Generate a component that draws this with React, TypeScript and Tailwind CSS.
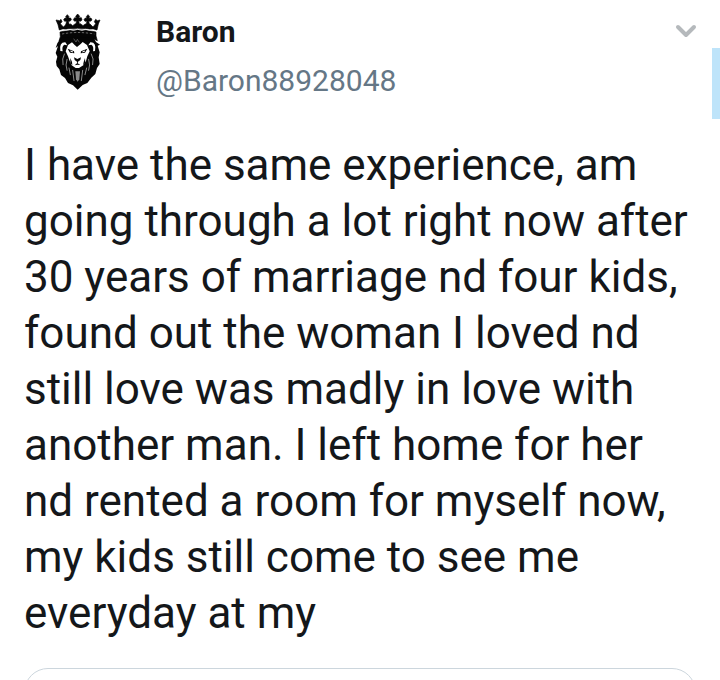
import { ChevronDown } from "lucide-react";

const tweet = {
  name: "Baron",
  handle: "@Baron88928048",
  text: "I have the same experience, am going through a lot right now after 30 years of marriage nd four kids, found out the woman I loved nd still love was madly in love with another man. I left home for her nd rented a room for myself now, my kids still come to see me everyday at my",
};

const LionAvatar = () => (
  <svg viewBox="28 22 144 240" className="h-20 w-12" role="img" aria-label="Lion wearing a crown">
    {/* Crown */}
    <g fill="#050505" stroke="#050505" strokeWidth="2" strokeLinejoin="round">
      <path d="M34 46 L45 48 L49 44 L52 51 L47 57 L56 67 L66 58 L69 61 L78 58 L84 63 L92 57 L99 62 L107 57 L115 63 L122 58 L131 61 L136 58 L145 67 L153 57 L149 51 L153 44 L158 48 L166 46 L161 58 L157 76 Q98 66 44 76 L40 60 Z" />
      <path d="M68 30 L73 36 L71 40 L78 40 L80 46 L75 50 L71 49 L74 62 L63 62 L66 49 L60 50 L57 45 L61 40 L66 41 L63 36 Z" />
      <path d="M99 28 L105 35 L102 40 L110 39 L112 46 L107 50 L102 48 L105 62 L93 62 L96 48 L90 50 L86 45 L90 39 L96 40 L93 35 Z" />
      <path d="M130 30 L135 36 L132 41 L139 40 L142 46 L137 50 L132 49 L135 62 L124 62 L127 49 L121 50 L118 45 L122 40 L127 41 L125 36 Z" />
      <path d="M46 82 Q98 68 154 82 L154 94 L158 108 L149 104 L51 105 L43 109 L47 96 Z" />
    </g>
    <g stroke="#fff" fill="none">
      <path d="M45 79 Q55 71 65 77 Q77 72 86 77 Q99 71 112 77 Q124 71 134 77 Q145 71 155 79" strokeWidth="2.5" />
      <path d="M52 88 Q98 79 149 88" strokeWidth="1.2" strokeDasharray="7 5" />
    </g>
    {/* Mane */}
    <path
      fill="#050505"
      d="M50 98 L146 98 L154 112 L166 120 L159 123 L165 143 L162 158 L165 178 L157 190 L152 208 L140 219 L128 235 L114 241 L99 255 L85 242 L70 235 L61 220 L49 211 L44 194 L36 184 L34 171 L38 156 L33 145 L40 124 L33 130 L38 116 Z"
    />
    {/* Ears and face */}
    <g fill="#fff">
      <path d="M47 139 Q43 112 62 113 L68 122 L59 120 Q51 124 54 140 Z" />
      <path d="M151 139 Q156 112 137 113 L131 122 L140 120 Q148 124 145 140 Z" />
      <path d="M70 121 L82 113 L90 121 L97 127 L108 118 L114 112 L127 121 L135 140 L128 155 L124 169 L116 182 L103 190 L93 190 L81 182 L75 169 L70 155 L63 140 Z" />
    </g>
    {/* Eyes, nose and mouth */}
    <g fill="#050505">
      <path d="M69 132 L88 140 L89 146 L76 144 Z M128 132 L109 140 L108 146 L121 144 Z" />
      <path d="M88 158 L98 163 L109 158 L107 166 L100 171 L99 176 L107 181 L99 180 L90 182 L97 176 L97 171 L90 166 Z" />
      <path d="M77 160 L82 172 L83 182 L77 175 Z M121 160 L117 172 L115 182 L122 175 Z" />
    </g>
    <path d="M77 139 L85 142 M113 142 L121 139" stroke="#fff" strokeWidth="3" />
    {/* Strands of hair */}
    <g fill="none" stroke="#fff" strokeWidth="1.6" strokeLinecap="round">
      <path d="M59 148 Q51 162 55 180 M67 164 Q61 181 67 197" />
      <path d="M140 148 Q149 162 144 180 M132 164 Q138 181 132 197" />
      <path d="M84 197 L88 228 M114 197 L110 228 M73 190 L77 210 M126 190 L121 210" />
    </g>
    <path d="M92 200 L106 200 L104 224 L99 231 L94 224 Z" fill="#8a8a8a" />
    <path d="M87 102 L94 112 L98 104 L104 113" fill="none" stroke="#999" strokeWidth="1.5" />
  </svg>
);

export default function App() {
  return (
    <main className="relative overflow-hidden bg-white font-['Roboto',sans-serif] text-[#14171a]">
      <article className="px-6">
        <header className="flex items-start pt-3">
          <div className="flex w-[132px] shrink-0 pl-[30px]">
            <LionAvatar />
          </div>
          <div className="min-w-0 flex-1">
            <h1 className="text-[30px] leading-10 font-bold">{tweet.name}</h1>
            <a href="#profile" className="mt-[9px] block text-[30px] leading-10 text-[#657786]">
              {tweet.handle}
            </a>
          </div>
          <button type="button" aria-label="More options" className="mt-[3px] -mr-1.5 text-[#b5b9bc]">
            <ChevronDown className="size-8" strokeWidth={3} />
          </button>
        </header>

        <p className="mt-9 text-[44px] leading-[56px]">{tweet.text}</p>

        {/* Quoted tweet, only its top edge is in view */}
        <div className="mt-[27px] h-3 overflow-hidden">
          <div className="h-24 rounded-3xl border border-[#ccd6dd]" />
        </div>
      </article>

      <div className="absolute top-12 right-0 h-[71px] w-2 bg-[#bee4fa]" />
    </main>
  );
}
